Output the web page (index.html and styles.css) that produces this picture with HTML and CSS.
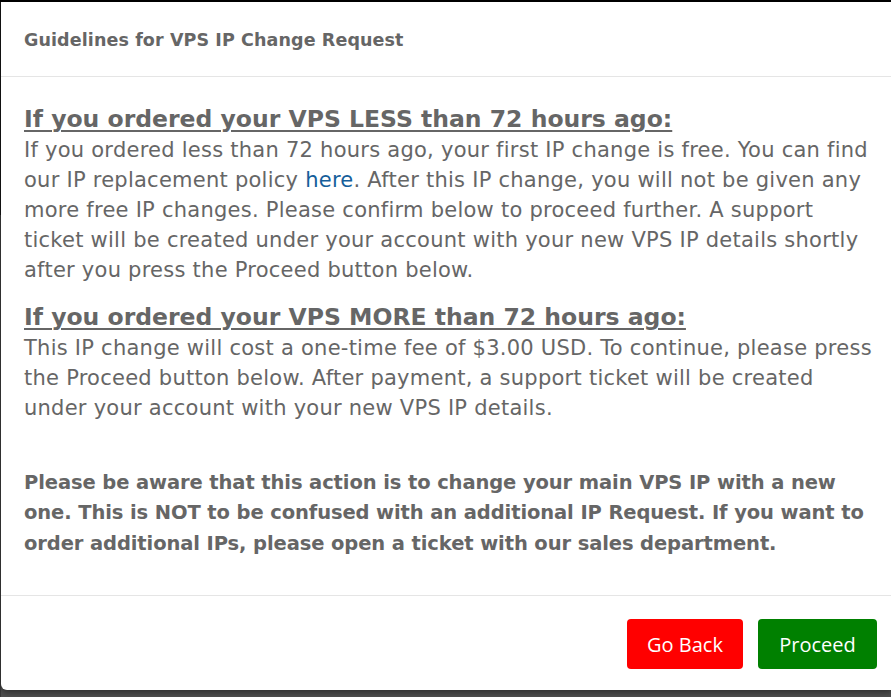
FILE: index.html
```html
<!DOCTYPE html>
<html lang="en">
<head>
<meta charset="utf-8">
<title>Guidelines for VPS IP Change Request</title>
<link rel="stylesheet" href="styles.css">
</head>
<body>
<div class="backdrop">
  <div class="modal">
    <div class="modal-header">
      <h4 class="modal-title">Guidelines for VPS IP Change Request</h4>
    </div>
    <div class="modal-body">
      <h3 class="section-title">If you ordered your VPS LESS than 72 hours ago:</h3>
      <p class="section-text">If you ordered less than 72 hours ago, your first IP change is free. You can find our IP replacement policy <a href="#" class="link">here</a>. After this IP change, you will not be given any more free IP changes. Please confirm below to proceed further. A support ticket will be created under your account with your new VPS IP details shortly after you press the Proceed button below.</p>
      <h3 class="section-title">If you ordered your VPS MORE than 72 hours ago:</h3>
      <p class="section-text">This IP change will cost a one-time fee of $3.00 USD. To continue, please press the Proceed button below. After payment, a support ticket will be created under your account with your new VPS IP details.</p>
      <p class="notice">Please be aware that this action is to change your main VPS IP with a new one. This is NOT to be confused with an additional IP Request. If you want to order additional IPs, please open a ticket with our sales department.</p>
    </div>
    <div class="modal-footer">
      <button class="btn btn-back">Go Back</button>
      <button class="btn btn-proceed">Proceed</button>
    </div>
  </div>
</div>
</body>
</html>
```
FILE: styles.css
```css
html, body {
  margin: 0;
  padding: 0;
  height: 100%;
  overflow: hidden;
}
body {
  background: #505050;
  font-family: "DejaVu Sans", "Liberation Sans", sans-serif;
}
.backdrop {
  height: 100%;
  padding: 2px 0 0 1px;
  box-sizing: border-box;
  background: linear-gradient(to bottom, #000 0, #000 2px, transparent 2px),
              linear-gradient(to right, #151515 0, #151515 1px, transparent 1px) 0 0 / 100% 215px no-repeat,
              linear-gradient(to right, #3a3a3a 0, #3a3a3a 1px, transparent 1px);
}
.modal {
  width: 891px;
  height: 688px;
  background: #fff;
  border-radius: 0 0 0 6px;
  box-shadow: 0 3px 6px rgba(0,0,0,0.4);
  display: flex;
  flex-direction: column;
}
.modal-header {
  height: 75px;
  border-bottom: 1px solid #e5e5e5;
  padding: 0 23px;
  display: flex;
  align-items: center;
  box-sizing: border-box;
}
.modal-title {
  margin: 1px 0 0;
  font-size: 17.5px;
  font-weight: bold;
  color: #666;
  letter-spacing: 0.1px;
}
.modal-body {
  padding: 27px 20px 0 23px;
  flex: 1;
  color: #666;
}
.section-title {
  margin: 0;
  font-size: 23.5px;
  line-height: 30px;
  font-weight: bold;
  text-decoration: underline;
  text-decoration-thickness: 2px;
  text-underline-offset: 3px;
}
.section-text {
  margin: 1px 0 17px;
  font-size: 21px;
  line-height: 30px;
  letter-spacing: 0.25px;
}
.link {
  color: #155e9a;
  text-decoration: none;
}
.notice {
  margin: 45px 2px 0 0;
  font-size: 19.5px;
  line-height: 30.3px;
  font-weight: bold;
  letter-spacing: -0.1px;
}
.modal-footer {
  height: 95px;
  border-top: 1px solid #e5e5e5;
  box-sizing: border-box;
  display: flex;
  justify-content: flex-end;
  align-items: flex-start;
  gap: 15px;
  padding: 23px 15px 0 0;
}
.btn {
  border: none;
  border-radius: 4px;
  height: 50px;
  padding: 0 19px;
  font-family: "Open Sans", "Noto Sans", sans-serif;
  font-size: 20px;
  color: #fff;
  cursor: pointer;
}
.btn-back {
  background: #ff0000;
  width: 116px;
}
.btn-proceed {
  background: #008000;
  width: 119px;
}
```
